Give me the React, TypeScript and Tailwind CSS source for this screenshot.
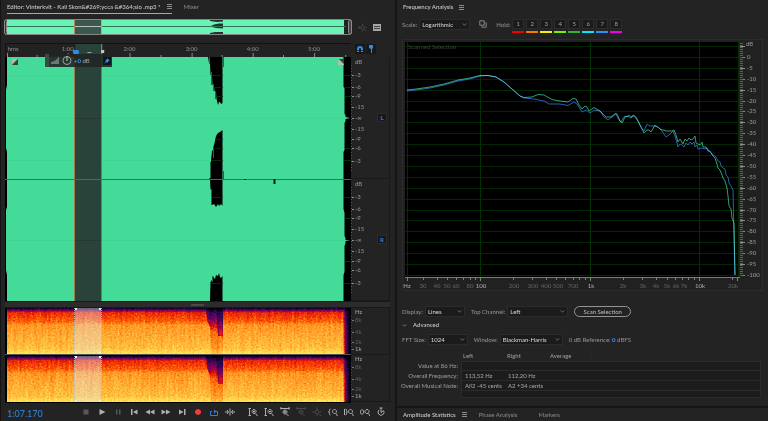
import { useState } from "react";
import type { ReactNode } from "react";

const RULER_MARKS = [
  { label: "1:00", x: 17.9 },
  { label: "2:00", x: 35.8 },
  { label: "3:00", x: 53.8 },
  { label: "4:00", x: 71.5 },
  { label: "5:00", x: 89.3 },
];

// Distance from the top of a channel, in pixels
const LEVEL_MARKS = [
  { label: "dB", y: 5 },
  { label: "-3", y: 18 },
  { label: "-6", y: 30 },
  { label: "-9", y: 39 },
  { label: "-15", y: 50 },
  { label: "-∞", y: 61 },
  { label: "-15", y: 72 },
  { label: "-9", y: 82 },
  { label: "-6", y: 91 },
  { label: "-3", y: 104 },
];

const HERTZ_MARKS = [
  { label: "Hz", y: 4, bright: true },
  { label: "8k", y: 12, bright: false },
  { label: "4k", y: 24, bright: false },
  { label: "2k", y: 34, bright: false },
  { label: "1k", y: 41, bright: true },
];

const HOLD_COLORS = [
  "bg-[#f00000]",
  "bg-[#f57c00]",
  "bg-[#f8f000]",
  "bg-[#78f000]",
  "bg-[#34b034]",
  "bg-[#00e8f8]",
  "bg-[#2890f8]",
  "bg-[#f000e8]",
];

const FREQ_LABELS = [
  { label: "Hz", x: 407, bright: true },
  { label: "30", x: 423, bright: false },
  { label: "40", x: 437, bright: false },
  { label: "50", x: 447, bright: false },
  { label: "60", x: 456, bright: false },
  { label: "80", x: 470, bright: false },
  { label: "100", x: 481, bright: true },
  { label: "200", x: 514, bright: false },
  { label: "300", x: 533, bright: false },
  { label: "400", x: 546, bright: false },
  { label: "500", x: 558, bright: false },
  { label: "700", x: 573, bright: false },
  { label: "1k", x: 591, bright: true },
  { label: "2k", x: 623, bright: false },
  { label: "3k", x: 643, bright: false },
  { label: "4k", x: 656, bright: false },
  { label: "5k", x: 667, bright: false },
  { label: "6k", x: 676, bright: false },
  { label: "7k", x: 684, bright: false },
  { label: "10k", x: 700, bright: true },
  { label: "20k", x: 733, bright: false },
];

const LEFT_CURVE =
  "407,90 416,89 430,87 444,84 458,80 470,78 480,75.5 488,75.5 496,77 504,82 512,89 520,96 524,97.5 532,97 538,94.5 544,95 552,99.5 560,101 568,102 573,98.5 576,99 579,105 582,109 585,106 587,107 589,111 594,107.5 600,111 606,117 611,117 616,113 618,116 620,121 622,123 625,117 628,116 631,118 633,115 636,117 638,121 641,127 644,133 647,130 649,130 651,132 655,125 660,129 666,131 670,131 672,131 674,130 676,135 678,142 680,139 683,144 685,139 687,141 689,138 691,140 693,139 695,136 696,143 698,144 700,145 702,142 703,147 706,147 708,151 710,151 713,156 715,158 717,164 718,168 720,170 722,175 723,178 725,181 727,188 728,196 729,206 731,209 732,218 734,223 735,275";
const RIGHT_CURVE =
  "407,91 416,90 430,88 444,85 458,81 470,79 480,76 488,75.5 496,77 504,82 512,89 520,96 524,98 534,99 544,101 549,104 560,104 568,105.5 574,102 577,104 579,107 582,112 586,110 590,113 594,110 600,111 604,117 608,120 612,117 616,114 619,120 621,122 623,118 625,116 627,117 629,115 632,117 634,116 638,121 641,127 644,131 647,124 650,126 654,126 658,127 662,131 666,137 669,135 673,131 675,136 677,143 678,147 680,144 682,145 684,147 686,143 688,145 690,142 692,144 694,142 695,147 697,145 698,149 702,148 705,149 707,148 709,151 712,154 716,157 718,161 720,162 721,166 723,168 725,169 726,175 728,177 729,183 731,186 733,190 734,240 735,275";

type IconProps = { d: string; className?: string; fill?: boolean; size?: string };

function Icon({ d, className = "", fill = false, size = "size-[10px]" }: IconProps) {
  return (
    <svg
      viewBox="0 0 20 20"
      className={`${size} ${className}`}
      fill={fill ? "currentColor" : "none"}
      stroke={fill ? "none" : "currentColor"}
      strokeWidth="2"
      aria-hidden="true"
    >
      <path d={d} />
    </svg>
  );
}

function MenuIcon() {
  return (
    <svg viewBox="0 0 5 5" className="size-[5px]" stroke="#8c8c8c" aria-hidden="true">
      <path d="M0 .5h5M0 2.500h5M0 4.500h5" />
    </svg>
  );
}

type DropDownProps = { id: string; label: string; options: string[]; width: string };

function DropDown({ id, label, options, width }: DropDownProps) {
  return (
    <div className="flex items-center gap-[2px]">
      <label htmlFor={id} className="text-[#8d8d8d]">
        {label}
      </label>
      <div className="relative flex">
        <select
          id={id}
          defaultValue={options[0]}
          className={`h-[11px] appearance-none border border-[#2b2b2b] bg-[#1b1b1b] pl-[2px] text-[#d0d0d0] ${width}`}
        >
          {options.map((option) => (
            <option key={option}>{option}</option>
          ))}
        </select>
        <Icon
          d="M3 6l7 7 7-7"
          size="size-[5px]"
          className="pointer-events-none absolute right-[3px] top-[3px] text-[#c0c0c0]"
        />
      </div>
    </div>
  );
}

function Overview() {
  return (
    <div className="flex h-[17px] items-center gap-[6px] pl-[4px] pr-[14px]">
      <svg viewBox="4 19 348 17" preserveAspectRatio="none" className="h-[17px] min-w-0 flex-1">
        <rect x="4.5" y="19.5" width="347" height="15" rx="2" fill="#262626" stroke="#858585" />
        <rect x="7" y="20" width="337" height="14" fill="#69f3b5" />
        <path d="M210 20h13v1.500l-6 .5-7-1zM210 26.500l4-2 5-1h4v5l-7-.5zM210 33l5-1h8v2h-13z" fill="#26312d" />
        <path d="M344 20h4v14h-4l1-7z" fill="#1d2421" />
        <path d="M7 26.500H346" stroke="#2c7455" />
        <rect x="75" y="20" width="26" height="14" fill="#3c574d" />
        <path d="M75 26.500h26" stroke="#b5c2bd" />
        <path d="M74.500 20v14" stroke="#b08a5c" />
        <path d="M101.500 20v14" stroke="#90b8a7" />
        <rect x="4.500" y="20.500" width="2" height="13" rx="1" fill="#333" stroke="#8c8c8c" />
        <rect x="348.500" y="20.500" width="3" height="13" rx="1" fill="#444" stroke="#8c8c8c" />
      </svg>
      <button type="button" aria-label="Zoom out full" className="flex text-[#4b4b4b]">
        <Icon d="M1 10h4M16 10h3M10 1v4M10 15v3M14 14l4 4M10 6a4 4 0 1 0 .1 0M3 7l-2 3 2 3" size="size-[9px]" />
      </button>
      <button type="button" aria-label="Toggle list view" className="flex">
        <svg viewBox="0 0 8 7" className="h-[7px] w-[8px]" aria-hidden="true">
          <path d="M0 0h8v7H0z" fill="#a5a5a5" />
          <path d="M1 2.500h6M1 4.500h6" stroke="#444" />
        </svg>
      </button>
    </div>
  );
}

function TimeRuler() {
  return (
    <div className="flex h-[14px] pl-[5px] pr-[5px]">
      <svg className="h-[14px] min-w-0 flex-1 border-l border-t border-[#111] bg-[#222]" fill="#898989">
        <text x="0.500%" y="7">hms</text>
        {RULER_MARKS.map((mark) => (
          <g key={mark.label}>
            <text x={`${mark.x}%`} y="7" textAnchor="middle">{mark.label}</text>
            <rect x={`${mark.x}%`} y="9" width="1" height="4" />
            <rect x={`${mark.x - 9}%`} y="11" width="1" height="2" />
          </g>
        ))}
        <rect x="0.300%" y="9" width="1" height="4" />
        <rect x="98.300%" y="11" width="1" height="2" />
        <rect x="20.100%" y="0" width="7.800%" height="14" fill="#29433b" />
        <rect x="27.600%" y="0" width="1" height="13" fill="#7d948b" />
        <rect x="27.600%" y="6" width="3" height="3" fill="#c8c8c8" />
        <rect x="19.400%" y="6" width="6" height="4" rx="1" fill="#2d8ceb" />
        <rect x="23.600%" y="8" width="4" height="1" fill="#9aa8a3" />
      </svg>
      <div className="flex w-[39px] gap-px pl-[4px] pt-[1px]">
        <button type="button" aria-label="Snap" className="flex size-[10px] items-center justify-center bg-[#191919]">
          <svg viewBox="0 0 8 8" className="size-[8px]" aria-hidden="true">
            <path d="M2 7V4a2 2 0 0 1 4 0v3" fill="none" stroke="#2d8ceb" strokeWidth="2" />
            <path d="M1 5.500h2M5 5.500h2" stroke="#191919" strokeWidth=".7" />
          </svg>
        </button>
        <button type="button" aria-label="Add marker" className="flex size-[10px] items-center justify-center bg-[#191919]">
          <svg viewBox="0 0 8 8" className="size-[8px]" aria-hidden="true">
            <path d="M2 0h4v3L5 4v4H4V4L2 3z" fill="#2d8ceb" />
          </svg>
        </button>
      </div>
    </div>
  );
}

function FadeHandle({ x, flip = false }: { x: number; flip?: boolean }) {
  return (
    <g>
      <rect x={x} y="59" width="6" height="6" fill="#8aa79a" />
      <path d={flip ? `M${x} 59v6h6z` : `M${x + 6} 59v6h-6z`} fill={flip ? "#b4bcb8" : "#34423c"} />
      <path d={flip ? `M${x + 1} 59h5v5z` : `M${x} 59h5l-5 5z`} fill={flip ? "#34423c" : "#b4bcb8"} />
    </g>
  );
}

function Waveform() {
  return (
    <svg viewBox="5 57 346 244" preserveAspectRatio="none" className="h-[244px] min-w-0 flex-1 bg-black">
      <path
        d="M7 57H343.500V87L344.500 88V114L345.500 115V117L350 118 345.500 119V121L344.500 123V150L343.500 152V209L344.500 213V236L345.500 238V240L350 240.500 345.500 241V243L344.500 246V272L343.500 275V301H7V275L6 270V210L7 207V152L6 148V90L7 85z"
        fill="#44db98"
      />
      <g fill="#000">
        <path d="M208 57L209 63 210 64 210.500 75 212 76 212.500 85 214 86 214.500 91 216 92 216.500 99 217 101 218 105 219 102 220 102 221 104 222.500 103V57z" />
        <path d="M222.500 130L220 132 218 133 216 136 215 141 214 145 213 150 212 151 211 161 210.500 164 210 178 209 179H222.500z" />
        <path d="M210 180L210.500 189 212 193 212 205 214 204 216 207 218 204 219 206 221 204 222.500 206V180z" />
        <path d="M222.500 276L221 278 220 277 219 273 218 276 216 275 215 279 214 278 213 276 212 280 210.500 282 210 301H222.500z" />
      </g>
      <path d="M209.500 57v7M211.500 72v13M213.500 84v7M215.500 92v7M223.500 57v10M213.500 146v12M210.500 162v16M223.500 171v8M211.500 189v16M212.500 276v6" stroke="#1d6a49" />
      <path d="M212 75.500h11M215 87.500h8M216 96.500h7M215 139.500h8M213 148.500h10M211 160.500h12M212 197.500h11M211 283.500h12M344 75.500h7M345 87.500h6M345 96.500h6M345 148.500h6M344 160.500h7M344 197.500h7M345 218.500h6M345 261.500h6M344 283.500h7" stroke="#082c0b" />
      <path d="M7 75.500H208M7 118.500H344M7 160.500H209M7 240.500H344" stroke="#3dd090" opacity=".5" />
      <rect x="75" y="57" width="26" height="244" fill="#29433b" />
      <path d="M75 118.500h26M75 240.500h26" stroke="#24382f" />
      <path d="M74.500 57V301" stroke="#a07a4c" />
      <path d="M101.500 57V301" stroke="#4d8c70" />
      <path d="M5 179.500H351" stroke="#55635c" />
      <path d="M274.500 179v5" stroke="#0b1c14" strokeWidth="2" />
      <path d="M244 179.500h2" stroke="#222" />
      <FadeHandle x={12} />
      <FadeHandle x={338} flip />
    </svg>
  );
}

function LevelScale({ channel }: { channel: string }) {
  return (
    <div className="flex h-[122px] items-center justify-between border-b border-r border-[#191919]">
      <svg className="h-[121px] w-[20px]" fill="#909090">
        {LEVEL_MARKS.map((mark, i) => (
          <g key={i}>
            {i > 0 && <rect x="1" y={mark.y} width="2" height="1" />}
            <text x="4" y={mark.y + 2}>{mark.label}</text>
          </g>
        ))}
        <path d="M.5 8v108" stroke="#555" strokeDasharray="1 2" fill="none" />
      </svg>
      <button
        type="button"
        className="mr-[2px] h-[9px] w-[10px] border border-[#2b2b2b] bg-[#181818] text-center leading-[7px] font-bold text-[#2d82d8]"
      >
        {channel}
      </button>
    </div>
  );
}

// Volume HUD that floats at the start of the selection
function VolumeHud() {
  return (
    <div className="absolute left-[45px] top-[11px] flex h-[13px] w-[67px] items-center bg-[#202624]/90">
      <span className="h-full w-[4px] bg-[#414744]" />
      <svg viewBox="0 0 22 11" className="ml-[2px] h-[11px] w-[22px]" aria-hidden="true">
        <path d="M0 9h8V1Q6 6 0 7z" fill="#6f7773" />
        <circle cx="16" cy="5.500" r="4" fill="none" stroke="#9ca29f" />
        <path d="M16 1v5" stroke="#c0c4c2" />
      </svg>
      <span className="ml-[1px] font-bold text-[#3b94ee]">
        +0 <span className="font-medium text-[#9ca3a0]">dB</span>
      </span>
      <button type="button" aria-label="Pin" className="ml-auto mr-[1px] flex size-[8px] items-center justify-center bg-[#0f1418]">
        <Icon fill d="M1 19l6-10-3-2 4-1 3-5 8 8-5 3-1 4-3-3z" size="size-[6px]" className="text-[#2d8ceb]" />
      </button>
    </div>
  );
}

function Spectrogram() {
  return (
    <svg viewBox="5 308 346 95" preserveAspectRatio="none" className="h-[95px] min-w-0 flex-1 bg-black">
      <defs>
        <linearGradient id="energy" x1="0" y1="0" x2="0" y2="1">
          <stop offset="0" stopColor="#181818" />
          <stop offset=".05" stopColor="#525252" />
          <stop offset=".1" stopColor="#888" />
          <stop offset=".3" stopColor="#a3a3a3" />
          <stop offset=".37" stopColor="#bababa" />
          <stop offset=".6" stopColor="#c6c6c6" />
          <stop offset=".88" stopColor="#d4d4d4" />
          <stop offset="1" stopColor="#f0f0f0" />
        </linearGradient>
        <linearGradient id="quiet" x1="0" y1="0" x2="0" y2="1">
          <stop offset="0" stopColor="#000" stopOpacity=".6" />
          <stop offset=".25" stopColor="#000" stopOpacity=".42" />
          <stop offset=".42" stopColor="#000" stopOpacity=".3" />
          <stop offset=".5" stopColor="#000" stopOpacity=".16" />
          <stop offset="1" stopColor="#000" stopOpacity=".1" />
        </linearGradient>
        <linearGradient id="tail">
          <stop offset="0" stopColor="#000" stopOpacity="0" />
          <stop offset=".3" stopColor="#000" stopOpacity=".6" />
          <stop offset="1" stopColor="#000" />
        </linearGradient>
        <filter id="heat" x="0" y="0" width="1" height="1" colorInterpolationFilters="sRGB">
          <feTurbulence type="fractalNoise" baseFrequency=".55 .6" numOctaves="2" seed="4" />
          <feColorMatrix values="1 0 0 0 0  1 0 0 0 0  1 0 0 0 0  0 0 0 0 1" result="grain" />
          <feTurbulence type="fractalNoise" baseFrequency=".35 .03" numOctaves="2" seed="9" />
          <feColorMatrix values="1 0 0 0 0  1 0 0 0 0  1 0 0 0 0  0 0 0 0 1" result="streak" />
          <feComposite in="SourceGraphic" in2="grain" operator="arithmetic" k2="1" k3=".26" k4="-.13" />
          <feComposite in2="streak" operator="arithmetic" k2="1" k3=".14" k4="-.07" />
          <feComponentTransfer>
            <feFuncR type="table" tableValues="0 .04 .16 .36 .6 .88 .98 1 1 1 1" />
            <feFuncG type="table" tableValues="0 .01 .02 .02 .02 .08 .28 .54 .7 .86 .94" />
            <feFuncB type="table" tableValues="0 .1 .3 .38 .28 .06 0 .1 .22 .3 .36" />
          </feComponentTransfer>
        </filter>
      </defs>
      {[308, 356].map((y) => (
        <g key={y}>
          <g filter="url(#heat)">
            <rect x="7" y={y} width="344" height="46" fill="url(#energy)" />
            <path d={`M206 ${y}h17v46h-12l-1-26-3-8z`} fill="url(#quiet)" />
            <path d={`M216 ${y}h7v28h-5z`} fill="#000" opacity=".28" />
            <rect x="343" y={y} width="8" height="46" fill="url(#tail)" />
          </g>
          <rect x="75" y={y} width="26" height="46" fill="#e8e8e8" opacity=".42" />
          <path d={`M74.500 ${y}v46M101.500 ${y}v46`} stroke="#cfcfcf" strokeDasharray="1 1" opacity=".7" />
          <path d={`M75 ${y}h2v2h-2zM99 ${y}h2v2h-2zM75 ${y + 44}h2v2h-2zM99 ${y + 44}h2v2h-2z`} fill="#eee" />
        </g>
      ))}
      <path d="M5 354.500H351" stroke="#555" />
    </svg>
  );
}

function HertzScale() {
  return (
    <svg className="h-[47px] w-[39px] border-b border-r border-[#191919]">
      {HERTZ_MARKS.map((mark) => (
        <text key={mark.label} x="4" y={mark.y + 2} fill={mark.bright ? "#a0a0a0" : "#5b5b5b"}>
          {mark.label}
        </text>
      ))}
      <path d="M1 12.500h2M1 24.500h2M1 34.500h2M1 41.500h2" stroke="#777" />
      <path d="M.5 8v36" stroke="#444" strokeDasharray="1 2" />
    </svg>
  );
}

function ToolButton({ label, children, color = "text-[#b0b0b0]" }: { label: string; children: ReactNode; color?: string }) {
  return (
    <button type="button" aria-label={label} className={`flex w-[16px] justify-center ${color}`}>
      {children}
    </button>
  );
}

function Transport() {
  return (
    <div className="flex h-[18px] items-center pl-[7px]">
      <output className="w-[71px] pt-[2px] text-[9px] leading-none text-[#2d82d8]">1:07.170</output>
      <ToolButton label="Stop" color="text-[#585858]"><Icon fill d="M5 5h10v10H5z" /></ToolButton>
      <ToolButton label="Play"><Icon fill d="M5 4l12 6-12 6z" /></ToolButton>
      <ToolButton label="Pause" color="text-[#585858]"><Icon fill d="M6 5h3v10H6zM12 5h3v10h-3z" /></ToolButton>
      <ToolButton label="Go to start"><Icon fill d="M4 4h3v12H4zM17 5v10l-9-5z" /></ToolButton>
      <ToolButton label="Rewind"><Icon fill d="M10 5v10l-9-5zM19 5v10l-9-5z" /></ToolButton>
      <ToolButton label="Fast forward"><Icon fill d="M1 5v10l9-5zM10 5v10l9-5z" /></ToolButton>
      <ToolButton label="Go to end"><Icon fill d="M14 4h3v12h-3zM4 5v10l9-5z" /></ToolButton>
      <ToolButton label="Record" color="text-[#f23c3c]"><Icon fill d="M10 4a6 6 0 1 0 .1 0z" /></ToolButton>
      <ToolButton label="Loop" color="text-[#2d82d8]">
        <svg viewBox="0 0 8 7" className="h-[7px] w-[8px]" fill="none" stroke="currentColor" aria-hidden="true">
          <path d="M2 2.500H.5v4h7v-4H4" />
          <path d="M4 .5l2.500 2L4 4.500z" fill="currentColor" stroke="none" />
        </svg>
      </ToolButton>
      <ToolButton label="Skip selection"><Icon d="M0 10h6M14 10h6M4 6l3 4-3 4M16 6l-3 4 3 4M10 3v14" /></ToolButton>
      <div className="ml-[7px] flex">
        <ToolButton label="Zoom in amplitude"><Icon d="M1 3h5M1 17h5M3 3v14M12 5a4 4 0 1 0 .1 0M15 13l4 5M12 7v4M10 9h4" /></ToolButton>
        <ToolButton label="Zoom out amplitude"><Icon d="M1 3h5M1 17h5M3 3v14M12 5a4 4 0 1 0 .1 0M15 13l4 5M10 9h4" /></ToolButton>
        <ToolButton label="Zoom in time"><Icon d="M1 3h18M2 0v5M18 0v5M10 6a4 4 0 1 0 .1 0M13 14l4 4M10 8v4M8 10h4" /></ToolButton>
        <ToolButton label="Zoom out time" color="text-[#4b4b4b]"><Icon d="M1 3h18M2 0v5M18 0v5M10 6a4 4 0 1 0 .1 0M13 14l4 4M8 10h4" /></ToolButton>
        <ToolButton label="Zoom reset" color="text-[#4b4b4b]"><Icon d="M1 10h4M16 10h3M10 1v4M10 15v3M14 14l4 4M10 6a4 4 0 1 0 .1 0" /></ToolButton>
        <ToolButton label="Zoom to in point"><Icon d="M5 4Q3 4 3 7t-2 3q2 0 2 3t2 3M13 5a4 4 0 1 0 .1 0M16 13l3 5" /></ToolButton>
        <ToolButton label="Zoom to out point"><Icon d="M1 4v12M3 4q2 0 2 3t2 3q-2 0-2 3t-2 3M13 5a4 4 0 1 0 .1 0M16 13l3 5" /></ToolButton>
        <ToolButton label="Zoom to selection"><Icon d="M3 5l-3 5 3 5M5 5l3 5-3 5M14 5a4 4 0 1 0 .1 0M17 13l3 5" /></ToolButton>
        <ToolButton label="Timer"><Icon d="M6 6a6 6 0 1 0 9 1M10 11V2M10 11l4-3M7 2h6" /></ToolButton>
      </div>
    </div>
  );
}

function EditorPanel() {
  return (
    <section className="flex min-w-0 flex-col border-l border-[#141414] bg-[#232323]">
      <nav className="-ml-px mb-[5px] flex h-[14px] gap-[12px] pl-[7px]">
        <div className="flex items-center gap-[6px] border-b border-[#a8a8a8] text-[#cacaca]">
          <a href="#editor">Editor: Vinterkvlt - Kali Skon&amp;#269;ycca &amp;#364;sio .mp3 *</a>
          <MenuIcon />
        </div>
        <a href="#mixer" className="pt-[3px] text-[#858585]">Mixer</a>
      </nav>
      <div className="-ml-px mb-[7px]">
        <Overview />
      </div>
      <div className="relative -ml-px">
        <TimeRuler />
        <div className="flex px-[5px]">
          <Waveform />
          <div className="w-[39px]">
            <LevelScale channel="L" />
            <LevelScale channel="R" />
          </div>
        </div>
        <VolumeHud />
        <div className="mx-[5px] flex h-[7px] items-center justify-center border-y border-[#181818] bg-[#2c2c2c]">
          <span className="h-[2px] w-[13px] bg-[#4a4a4a]" />
        </div>
        <div className="flex px-[5px]">
          <Spectrogram />
          <div className="w-[39px]">
            <HertzScale />
            <HertzScale />
          </div>
        </div>
        <Transport />
      </div>
    </section>
  );
}

function FrequencyGraph() {
  const levels = Array.from({ length: 22 }, (_, i) => ({ db: 5 - i * 5, y: Math.round(46 + i * 10.9) }));
  return (
    <svg viewBox="402 39 361 252" className="mx-[5px] w-auto">
      <rect x="402.500" y="39.500" width="360" height="251" fill="#212121" stroke="#2c2c2c" />
      <rect x="405" y="42" width="334" height="235" fill="#000" />
      {levels.map(({ db, y }) => (
        <g key={db}>
          <path d={`M405 ${y}.5H739`} stroke="#032603" />
          <path d={`M740 ${y}.5h5`} stroke="#8c8c8c" />
          {db < 5 && (
            <text x="747" y={y + 2} fill="#949494">{db}</text>
          )}
        </g>
      ))}
      <path d="M407.500 42v235M480.500 42v235M590.500 42v235M699.500 42v235M738.500 42v235" stroke="#033003" />
      <text x="408" y="49" fill="#3c3c3c">Scanned Selection</text>
      <text x="746" y="46" fill="#949494">dB</text>
      <path d="M741.500 43v233" stroke="#5c5c5c" strokeWidth="3" strokeDasharray="1 1" />
      <path d="M405 277.500h335" stroke="#7c7c7c" />
      <path
        d="M407.500 278v3M423.500 278v2M437.500 278v2M447.500 278v2M456.500 278v2M463.500 278v2M470.500 278v2M475.500 278v2M480.500 278v3M513.500 278v2M532.500 278v2M546.500 278v2M556.500 278v2M565.500 278v2M573.500 278v2M579.500 278v2M585.500 278v2M590.500 278v3M623.500 278v2M642.500 278v2M656.500 278v2M667.500 278v2M675.500 278v2M682.500 278v2M688.500 278v2M694.500 278v2M699.500 278v3M732.500 278v2M737.500 278v3"
        stroke="#808080"
      />
      {FREQ_LABELS.map((mark) => (
        <text key={mark.label} x={mark.x} y="288" textAnchor="middle" fill={mark.bright ? "#a8a8a8" : "#606060"}>
          {mark.label}
        </text>
      ))}
      <g fill="none" strokeLinejoin="round">
        <polyline points={RIGHT_CURVE} stroke="#2d5db4" />
        <polyline points={LEFT_CURVE} stroke="#2da070" className="mix-blend-screen" />
      </g>
    </svg>
  );
}

function ResultsTable() {
  const cell = "border-b border-[#2b2b2b] bg-[#1c1c1c] pl-[3px] text-[#a0a0a0]";
  return (
    <table className="w-full table-fixed border-separate border-spacing-0 text-left text-[#989898]">
      <colgroup>
        <col className="w-[64px]" />
        <col className="w-[44px]" />
        <col className="w-[43px]" />
        <col className="w-[43px]" />
        <col />
      </colgroup>
      <thead>
        <tr className="h-[11px]">
          <td />
          <th scope="col" className="pl-[2px] font-medium">Left</th>
          <th scope="col" className="pl-[2px] font-medium">Right</th>
          <th scope="col" className="border-r border-[#292929] pl-[2px] font-medium">Average</th>
          <td />
        </tr>
      </thead>
      <tbody>
        {[
          ["Value at 86 Hz:", "", ""],
          ["Overall Frequency:", "113,52 Hz", "112,20 Hz"],
          ["Overall Musical Note:", "A♯2 -45 cents", "A2 +34 cents"],
        ].map(([label, left, right], i) => (
          <tr key={label} className="h-[10px] whitespace-nowrap">
            <th scope="row" className="pr-[3px] text-right font-medium">{label}</th>
            <td className={`${cell} border-l ${i === 0 ? "border-t" : ""}`}>{left}</td>
            <td className={`${cell} ${i === 0 ? "border-t" : ""}`}>{right}</td>
            <td className={`${cell} ${i === 0 ? "border-t" : ""}`} />
            <td className={`${cell} border-r ${i === 0 ? "border-t" : ""}`} />
          </tr>
        ))}
        <tr className="h-[7px]">
          <td />
          <td colSpan={4} className={`${cell} border-x`} />
        </tr>
      </tbody>
    </table>
  );
}

function FrequencyPanel() {
  const [hold, setHold] = useState<number | null>(null);
  const [open, setOpen] = useState(true);

  return (
    <section className="flex min-w-0 flex-col bg-[#232323]">
      <h2 className="flex h-[14px] items-center gap-[6px] pl-[6px] text-[#cacaca]">
        Frequency Analysis
        <MenuIcon />
      </h2>
      <div className="flex h-[25px] items-start pl-[5px] pt-[5px]">
        <DropDown id="scale" label="Scale:" options={["Logarithmic", "Linear"]} width="w-[51px]" />
        <button type="button" aria-label="Copy all graph data" className="ml-[9px] mt-[1px] flex text-[#a0a0a0]">
          <Icon d="M2 2h11v11H2zM16 7h2v11H7v-2" size="size-[8px]" />
        </button>
        <span className="ml-[9px] w-[16px] pt-[2px] text-[#8d8d8d]">Hold:</span>
        <div className="flex gap-[2px]">
          {HOLD_COLORS.map((color, i) => (
            <button
              key={color}
              type="button"
              aria-pressed={hold === i}
              onClick={() => setHold(hold === i ? null : i)}
              className="flex w-[12px] flex-col gap-[2px] text-[#9a9a9a]"
            >
              <span className="flex h-[10px] w-full items-center justify-center border border-[#2b2b2b] bg-[#1b1b1b]">
                {i + 1}
              </span>
              <span className={`h-[2px] w-full ${color}`} />
            </button>
          ))}
        </div>
      </div>
      <FrequencyGraph />
      <div className="mt-[15px] flex items-center gap-[6px] pl-[5px]">
        <DropDown id="display" label="Display:" options={["Lines", "Area", "Bars"]} width="w-[40px]" />
        <DropDown id="top-channel" label="Top Channel:" options={["Left", "Right", "Average"]} width="w-[61px]" />
        <button
          type="button"
          className="h-[11px] w-[57px] rounded-full border border-[#949494] leading-[8px] text-[#b4b4b4]"
        >
          Scan Selection
        </button>
      </div>
      <button
        type="button"
        aria-expanded={open}
        onClick={() => setOpen(!open)}
        className="mt-[4px] flex items-center gap-[6px] pl-[5px] text-[#c8c8c8]"
      >
        <Icon d="M3 6l7 7 7-7" size="size-[5px]" />
        Advanced
      </button>
      {open && (
        <div className="mb-[8px] pr-[7px]">
          <div className="mb-[5px] mt-[5px] flex items-center gap-[6px] pl-[5px]">
            <DropDown id="fft-size" label="FFT Size:" options={["1024", "2048", "4096"]} width="w-[40px]" />
            <DropDown id="window" label="Window:" options={["Blackman-Harris", "Hamming"]} width="w-[63px]" />
            <span className="text-[#8d8d8d]">
              0 dB Reference: <span className="font-bold text-[#3b94ee]">0</span> dBFS
            </span>
          </div>
          <ResultsTable />
        </div>
      )}
      <nav className="mt-auto flex h-[15px] items-center border-t-2 border-[#161616] pl-[6px] text-[#858585]">
        <a href="#amplitude" className="mr-[6px] text-[#cacaca]">Amplitude Statistics</a>
        <MenuIcon />
        <a href="#phase" className="ml-[12px]">Phase Analysis</a>
        <a href="#markers" className="ml-[21px]">Markers</a>
      </nav>
    </section>
  );
}

export default function App() {
  return (
    <main className="grid min-h-screen grid-cols-[395fr_371fr] gap-[2px] bg-[#161616] font-['Lato',sans-serif] text-[6px] leading-[8px] font-medium">
      <EditorPanel />
      <FrequencyPanel />
    </main>
  );
}
